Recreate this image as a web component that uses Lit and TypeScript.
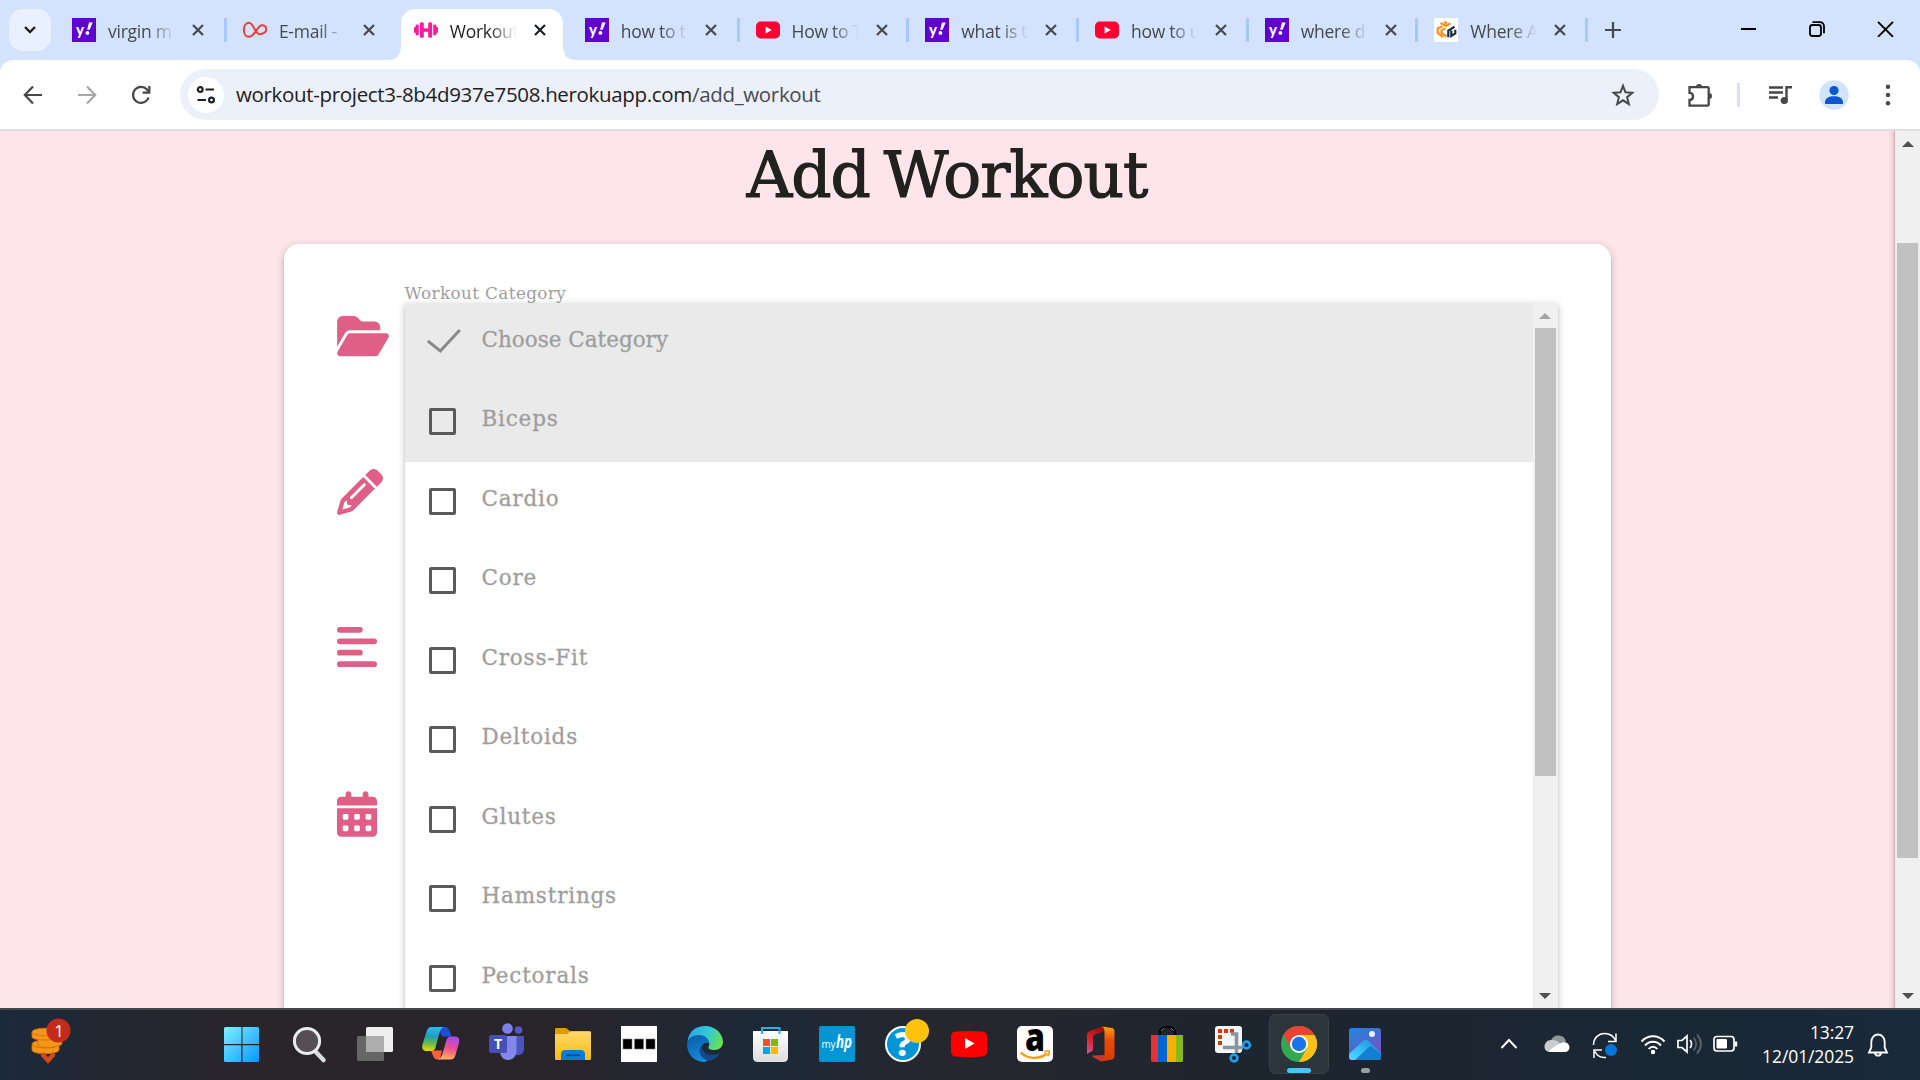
import { LitElement, html, css, TemplateResult } from "lit";
import { customElement } from "lit/decorators.js";
import { classMap } from "lit/directives/class-map.js";

const yahoo = html`<svg class="fav" viewBox="0 0 24 24"><rect width="24" height="24" fill="#5f01d1"/><text x="4" y="16.5" font-family="Lato, sans-serif" font-weight="900" font-size="15" fill="#fff">y</text><path d="M17 4.6h3.7l-3.1 7.2h-2.5z" fill="#fff"/><circle cx="15.4" cy="14.9" r="1.9" fill="#fff"/></svg>`;
const youtube = html`<svg class="fav" viewBox="0 0 24 24"><rect y="3.6" width="24" height="16.8" rx="4.5" fill="#ff0033"/><path d="M9.6 8.4v7.2l6.2-3.6z" fill="#fff"/></svg>`;
const virgin = html`<svg class="fav" viewBox="0 0 24 24"><path d="M6 4.8c4.800 0 6.500 13.500 12 11.200 3-.9 5.300-1.500 5.300-4.500S21 6.800 18.500 7.300C14.500 8 11.500 18.800 6 18.800 2.500 18.800.9 15.500.9 12S2.500 4.800 6 4.800z" fill="none" stroke="#ee3c35" stroke-width="1.9"/></svg>`;
const dumbbell = html`<svg class="fav" viewBox="0 0 24 24" fill="#fb1c9b"><rect x="0" y="9" width="2.200" height="6" rx="1"/><rect x="1.600" y="6.500" width="3.200" height="11" rx="1.4"/><rect x="5.800" y="4.300" width="4" height="15.400" rx="1.500"/><rect x="9" y="10.300" width="6" height="3.500"/><rect x="14.200" y="4.300" width="4" height="15.400" rx="1.500"/><rect x="19.200" y="6.500" width="3.200" height="11" rx="1.4"/><rect x="21.800" y="9" width="2.200" height="6" rx="1"/></svg>`;
const hexLogo = html`<svg class="fav" viewBox="0 0 24 24"><rect width="24" height="24" fill="#fff"/><g fill="none" stroke-width="2.200"><path d="M6.500 5l5.500 3 4.500-2.800M10 3.800l3.200 1.700" stroke="#f7931e"/><path d="M8.500 8.300 3.700 10.500v4.500l5.300 4M11.500 10.200 7.500 12.300v2.500l5 3.700" stroke="#f7931e"/><path d="M20.500 8.800 14.300 12.500v6.700M17.300 12.500v5.500l4-2.700v-3.600" stroke="#1c2a44"/></g></svg>`;

interface Tab { icon: TemplateResult; title: string; active?: boolean }
const tabs: Tab[] = [
  { icon: yahoo, title: "virgin m" },
  { icon: virgin, title: "E-mail -" },
  { icon: dumbbell, title: "Workout", active: true },
  { icon: yahoo, title: "how to t" },
  { icon: youtube, title: "How to T" },
  { icon: yahoo, title: "what is t" },
  { icon: youtube, title: "how to u" },
  { icon: yahoo, title: "where d" },
  { icon: hexLogo, title: "Where A" },
];

const options = ["Choose Category", "Biceps", "Cardio", "Core", "Cross-Fit", "Deltoids", "Glutes", "Hamstrings", "Pectorals"];

const taskIcons: TemplateResult[] = [
  html`<svg class="task" viewBox="0 0 66 72"><defs><linearGradient id="w" x1="0" y1="0" x2="1" y2="1"><stop offset="0" stop-color="#7ff0ff"/><stop offset="1" stop-color="#0a96ff"/></linearGradient></defs><path d="M15.500 19h15.700a1 1 0 0 1 .3.500V36H14V20.500A1.500 1.500 0 0 1 15.500 19zM32.500 19h15a1.500 1.500 0 0 1 1.500 1.500V36H32.500zM14 37.300h17.300V54H15.500a1.500 1.500 0 0 1-1.500-1.500zM32.500 37.300H49v15.200a1.500 1.500 0 0 1-1.500 1.500h-15z" fill="url(#w)"/></svg>`,
  html`<svg class="task" viewBox="0 0 66 72"><path d="M39 43l8.500 9" stroke="#d7dbde" stroke-width="4.500" stroke-linecap="round"/><circle cx="31" cy="33" r="12.600" fill="#554e55" stroke="#e9edef" stroke-width="3"/></svg>`,
  html`<svg class="task" viewBox="0 0 66 72"><rect x="15" y="28" width="27" height="25" rx="1.500" fill="#666"/><rect x="24" y="19" width="27" height="25" rx="1.500" fill="#eee"/><path d="M24 28h18v16H25.500a1.500 1.500 0 0 1-1.500-1.500z" fill="#adadad"/></svg>`,
  html`<svg class="task" viewBox="0 0 66 72"><defs><linearGradient id="c1" x1="0.400" y1="0" x2="0.300" y2="1"><stop offset="0" stop-color="#2cb8f5"/><stop offset=".4" stop-color="#239fb5"/><stop offset=".7" stop-color="#6dbb47"/><stop offset="1" stop-color="#f5d20c"/></linearGradient><linearGradient id="c2" x1="0.600" y1="0" x2="0.400" y2="1"><stop offset="0" stop-color="#a44bea"/><stop offset=".5" stop-color="#ee4f95"/><stop offset="1" stop-color="#fdb25c"/></linearGradient></defs><path d="M30 19h7c3 0 4 2 5 5l1.500 4.500H34z" fill="#1a4fd8"/><path d="M23 42.500h11L32 51.500h-3c-3 0-4-4-6-9z" fill="#f8603c"/><path d="M23 19h13c-3 1-4 4-5 7.500l-3.500 13c-.7 2.300-2 3.500-4 3.500H18.500c-3.500 0-5-2.500-4-6.500l4-13C19.500 20.500 21 19 23 19z" fill="url(#c1)"/><path d="M43 51.500H30c3-1 4-4 5-7.500l3.500-12c.7-2.300 2-3.500 4-3.500H47c3.500 0 5 2.500 4 6.500l-3.500 12c-.8 3-2.300 4.500-4.500 4.500z" fill="url(#c2)"/></svg>`,
  html`<svg class="task" viewBox="0 0 66 72"><circle cx="44.500" cy="22" r="3.800" fill="#5059c9"/><path d="M38 28h12v12.500c0 4-2 6-5 6.500h-7z" fill="#4b53bc"/><circle cx="33.500" cy="20.500" r="5.300" fill="#7b83eb"/><path d="M26 28h16.500v14.500C42.500 48 39 52 34 52c-5 0-8-4-8-9z" fill="#8288ea"/><rect x="15" y="27" width="18" height="18" rx="2" fill="#464eb8"/><text x="24" y="41" text-anchor="middle" font-family="Open Sans, sans-serif" font-weight="700" font-size="14" fill="#fff">T</text></svg>`,
  html`<svg class="task" viewBox="0 0 66 72"><defs><linearGradient id="f" x1="0" y1="0" x2="0" y2="1"><stop offset="0" stop-color="#ffd96a"/><stop offset="1" stop-color="#fbba10"/></linearGradient></defs><path d="M15 21.500c0-1 .7-1.500 1.500-1.500h9.500l4 3h19c1 0 2 .8 2 2v6H15z" fill="#e19b04"/><path d="M15 26h12l3.500-2.500H50c.7 0 1 .5 1 1V50.500c0 1-.8 1.500-1.500 1.500h-33c-.8 0-1.500-.5-1.500-1.500z" fill="url(#f)"/><path d="M21 52v-6c0-2 1.500-4 4-4h16c2.500 0 4 2 4 4v6z" fill="#0f7cd2"/><path d="M26 47.300h14" stroke="#0a4a8c" stroke-width="1.700"/></svg>`,
  html`<svg class="task" viewBox="0 0 66 72"><rect x="15" y="18" width="36" height="36" fill="#fff"/><path d="M17 31h9v10h-9zM28.500 31h9v10h-9zM40 31h9v10h-9z" fill="#000" stroke="#777" stroke-width=".6"/></svg>`,
  html`<svg class="task" viewBox="0 0 66 72"><defs><linearGradient id="e1" x1="0" y1="0.300" x2="1" y2="0.600"><stop offset="0" stop-color="#2aa8e8"/><stop offset=".5" stop-color="#2fc8d8"/><stop offset="1" stop-color="#6be34d"/></linearGradient><linearGradient id="e2" x1="0" y1="0" x2="0.300" y2="1"><stop offset="0" stop-color="#0c59a4"/><stop offset="1" stop-color="#1489d8"/></linearGradient></defs><path d="M15.500 33C17 23 24 18 33 18c11 0 18 8 18 16 0 5-4 8-8.500 8-4 0-7-1-6-3 1.500-2.500 1-7-4-9-6-2.500-13-1-17 3z" fill="url(#e1)"/><path d="M15 36c.5-6 6-9 12-9 6 0 10.500 4 10.500 9-2-2-5-1.500-7 1-3 4-1 11 5 14.500-.5 1.500-1.500 2.500-2.500 2.500C23 54 15 47 15 36z" fill="url(#e2)"/><path d="M29.500 37.500c-5 6 0 14.500 8.500 15.200 4-1 8-4 10.300-8-7 4-15 2-17.300-3-.7-1.700-1-3-1.500-4.200z" fill="#114a8b"/></svg>`,
  html`<svg class="task" viewBox="0 0 66 72"><defs><linearGradient id="s" x1="0" y1="0" x2="0" y2="1"><stop offset="0" stop-color="#fff"/><stop offset="1" stop-color="#dcdcdc"/></linearGradient></defs><path d="M15 23h35v26.500c0 3-2 4.500-4.500 4.500h-26c-2.500 0-4.500-1.500-4.500-4.500z" fill="url(#s)"/><path d="M24 26v-6h17.500v6" fill="none" stroke="#27b2e5" stroke-width="2"/><path d="M25 31h7v7h-7z" fill="#f25022"/><path d="M33 31h7v7h-7z" fill="#7fba00"/><path d="M25 39h7v7h-7z" fill="#00a4ef"/><path d="M33 39h7v7h-7z" fill="#ffb900"/></svg>`,
  html`<svg class="task" viewBox="0 0 66 72"><rect x="15" y="18" width="36" height="36" rx="2" fill="#0096d6"/><text x="17.500" y="40" font-family="Open Sans, sans-serif" font-size="11" textLength="14" lengthAdjust="spacingAndGlyphs" fill="#fff">my</text><text x="32" y="40" font-family="Open Sans, sans-serif" font-weight="700" font-style="italic" font-size="17" textLength="16" lengthAdjust="spacingAndGlyphs" fill="#fff">hp</text></svg>`,
  html`<svg class="task" viewBox="0 0 66 72"><circle cx="33" cy="36" r="17" fill="#0096d6" stroke="#fff" stroke-width="2"/><text x="33" y="48" text-anchor="middle" font-family="Open Sans, sans-serif" font-weight="800" font-size="33" fill="#fff">?</text><circle cx="47" cy="23" r="12" fill="#ffc20e"/></svg>`,
  html`<svg class="task" viewBox="0 0 66 72"><path d="M20 23.500q13-1.200 26 0c3.500.4 5 2 5 5.500v14c0 3.500-1.500 5.200-5 5.600q-13 1.200-26 0c-3.500-.4-5-2.100-5-5.600V29c0-3.500 1.500-5.100 5-5.500z" fill="#f00"/><path d="M29 30v11l9.500-5.500z" fill="#fff"/></svg>`,
  html`<svg class="task" viewBox="0 0 66 72"><rect x="15" y="18" width="36" height="36" rx="5" fill="#fff"/><text x="33" y="43" text-anchor="middle" font-family="Open Sans, sans-serif" font-weight="800" font-size="39" textLength="20" lengthAdjust="spacingAndGlyphs" fill="#000">a</text><path d="M18.500 44.500c8 7 19 7 26.500 1" fill="none" stroke="#f90" stroke-width="2.300"/><path d="M42 44c3-1.500 5-1.300 5.300-.8.300.8-.3 3-1.800 5" fill="none" stroke="#f90" stroke-width="1.500"/></svg>`,
  html`<svg class="task" viewBox="0 0 66 72"><defs><linearGradient id="o1" x1="0.500" y1="0" x2="0" y2="1"><stop offset="0" stop-color="#a90d10"/><stop offset=".5" stop-color="#d5242c"/><stop offset="1" stop-color="#c8599f"/></linearGradient><linearGradient id="o2" x1="0" y1="0" x2="0" y2="1"><stop offset="0" stop-color="#ffa014"/><stop offset=".4" stop-color="#e84a0a"/><stop offset="1" stop-color="#d83b01"/></linearGradient></defs><path d="M34 18.500 22 23c-2 .8-3 2-3 4v19l6-3.500V29c0-1 .5-2 1.500-2.300L37 23z" fill="url(#o1)"/><path d="M24 47.500l13-.5v5l-3.500 1.500-7-3.500c-2-1-2.500-2-2.500-2.500z" fill="#c9352c"/><path d="M34 18.500l10 1.500c1.800.5 2.500 1.500 2.500 3.500V48c0 2-.8 3-2.500 3.500L33.500 53.500c2-1 3-2.500 3-5V24c0-3-1-4.500-2.500-5.500z" fill="url(#o2)"/></svg>`,
  html`<svg class="task" viewBox="0 0 66 72"><path d="M26 28v-3c0-4 3-6 7.500-6s7.500 2 7.500 6v3" fill="none" stroke="#050505" stroke-width="2.600"/><path d="M27 23l3-3M37 20l3 3" stroke="#777" stroke-width="1"/><path d="M17 27h7v27h-5.500c-1 0-1.500-.8-1.500-1.500z" fill="#e53238"/><path d="M24 27h9v27h-9z" fill="#0064d2"/><path d="M33 27h9v27h-9z" fill="#f5af02"/><path d="M42 27h7v25.500c0 .7-.5 1.500-1.500 1.500H42z" fill="#86b817"/></svg>`,
  html`<svg class="task" viewBox="0 0 66 72"><rect x="15" y="18" width="27" height="27" rx="3" fill="#f3f6f9"/><path d="M20 37V23h14" fill="none" stroke="#d83b01" stroke-width="4" stroke-dasharray="4 2"/><path d="M36.500 45V26H31M23 39.500h20" fill="none" stroke="#8d959c" stroke-width="3.600"/><circle cx="46.500" cy="37" r="3.400" fill="none" stroke="#1ba1ee" stroke-width="2.600"/><circle cx="34" cy="50" r="3.400" fill="none" stroke="#1ba1ee" stroke-width="2.600"/></svg>`,
  html`<svg class="task" viewBox="0 0 66 72"><rect x="3.500" y="6.500" width="59" height="59" rx="6" fill="#2d353c" stroke="#394148"/><circle cx="33" cy="36" r="18" fill="#34a853"/><path d="M17.400 27A18 18 0 0 1 48.600 27H33l-7.800 13.500z" fill="#ea4335"/><path d="M48.600 27A18 18 0 0 1 33 54l7.800-13.500L33 27z" fill="#fbc116"/><circle cx="33" cy="36" r="9" fill="#fff"/><circle cx="33" cy="36" r="7.200" fill="#1a73e8"/><rect x="21" y="60" width="24" height="5" rx="2.500" fill="#4cc2ff"/></svg>`,
  html`<svg class="task" viewBox="0 0 66 72"><defs><linearGradient id="p" x1="0" y1="0" x2="0.600" y2="1"><stop offset="0" stop-color="#1a8ade"/><stop offset="1" stop-color="#7a4fc0"/></linearGradient><linearGradient id="q" x1="0" y1="1" x2="1" y2="0"><stop offset="0" stop-color="#4fdcff"/><stop offset="1" stop-color="#168ee0"/></linearGradient></defs><rect x="17" y="20" width="32" height="32" rx="3" fill="url(#p)"/><path d="M17 46l14.500-13.500c1.500-1.300 3-1.300 4.500 0L49 45v4c0 2-1 3-3 3H20c-2 0-3-1-3-3z" fill="url(#q)"/><path d="M23 52l14-13c1.200-1 2.300-1 3.500 0L49 46v3c0 2-1 3-3 3z" fill="#147fd0"/><circle cx="40" cy="26" r="3" fill="#e7f1fb"/><rect x="29" y="60" width="9" height="5" rx="2.500" fill="#9a9fa4"/></svg>`,
];

@customElement("app-root")
export class AppRoot extends LitElement {
  static styles = css`
    :host { display: block; width: 1920px; height: 1080px; overflow: hidden; font-family: "Open Sans", "Noto Sans", sans-serif; }
    * { box-sizing: border-box; }
    svg { display: block; flex: none; }
    .screen { width: 1920px; height: 1080px; display: flex; flex-direction: column; background: #fee5ec; }
    .tabbar { height: 60px; flex: none; display: flex; background: #d3e2fd; padding-left: 9px; }
    .search { width: 42px; height: 42px; margin-top: 9px; margin-right: 5px; border-radius: 14px; background: #eaf1fe; display: flex; align-items: center; justify-content: center; flex: none; }
    .tab { width: 169.7px; flex: none; height: 60px; display: flex; align-items: center; padding-left: 16px; position: relative; color: #45494f; }
    .tab:nth-child(-n + 5) { width: 170.9px; }
    .tab.active { color: #1f2023; }
    .shape { position: absolute; left: -9px; top: 9px; }
    .fav { width: 24px; height: 24px; position: relative; }
    .title { width: 71px; margin-left: 12px; font-size: 17.5px; letter-spacing: -0.25px; line-height: 30px; white-space: nowrap; position: relative; top: 1px; -webkit-mask-image: linear-gradient(90deg, #000 56%, transparent 94%); mask-image: linear-gradient(90deg, #000 56%, transparent 94%); }
    .close { margin-left: 13px; position: relative; }
    .sep { width: 3px; height: 24px; border-radius: 1px; background: #a8c7fa; margin-left: auto; }
    .plus { margin-top: 22px; margin-left: 17px; }
    .win { display: flex; align-items: center; margin-left: auto; height: 58px; gap: 51px; padding-right: 26px; }
    .under { background: #d3e2fd; flex: none; }
    .toolbar { height: 71px; background: #fff; border-radius: 13px 13px 0 0; border-bottom: 2px solid #dfe1e1; display: flex; align-items: center; padding-left: 21px; }
    .nav { display: flex; gap: 30px; margin-right: 27px; }
    .url { width: 1479px; height: 51px; border-radius: 26px; background: #ebf0fa; display: flex; align-items: center; padding: 0 24px 0 8px; }
    .site { width: 36px; height: 36px; border-radius: 50%; background: #fff; display: flex; align-items: center; justify-content: center; }
    .addr { margin-left: 12px; margin-top: -2px; flex: 1; font-size: 20.5px; letter-spacing: -0.33px; color: #1f2023; white-space: nowrap; }
    .addr span { color: #474a50; }
    .tools { flex: 1; display: flex; align-items: center; padding-left: 27px; }
    .tsep { width: 3px; height: 24px; background: #d3e2fd; margin-left: 23px; }
    .t1 { margin-left: 27.5px; } .t2 { margin-left: 25px; } .t3 { margin-left: 35px; }
    .page { flex: 1; min-height: 0; display: flex; overflow: hidden; }
    .body { width: 1895px; display: flex; flex-direction: column; align-items: center; border-right: 1px solid #e0a8bb; box-shadow: inset -5px 0 5px -3px rgba(0,0,0,.13); font-family: "DejaVu Serif", "Liberation Serif", serif; }
    h1 { margin: 0; height: 113px; flex: none; padding-top: 7px; font-size: 63px; line-height: 76px; font-weight: 400; letter-spacing: -1px; word-spacing: -5px; color: #212121; -webkit-text-stroke: 1.2px #212121; }
    .card { width: 1327px; height: 900px; flex: none; background: #fff; border-radius: 15px; display: flex; padding: 0 53px; box-shadow: 0 3px 3px 0 rgba(0,0,0,.14), 0 4px 2px -3px rgba(0,0,0,.12), 0 2px 8px 0 rgba(0,0,0,.2); }
    .icons { width: 68px; display: flex; flex-direction: column; color: #e05f87; }
    .i1 { margin-top: 69px; } .i2 { margin-top: 110px; } .i3 { margin-top: 109px; } .i4 { margin-top: 121px; }
    .field { width: 1153px; display: flex; flex-direction: column; }
    .label { height: 59px; padding-top: 37px; font-size: 16.8px; line-height: 24px; letter-spacing: 0.4px; color: #9e9e9e; }
    .drop { flex: 1; display: flex; background: #fff; box-shadow: 0 3px 3px 0 rgba(0,0,0,.14), 0 4px 2px -3px rgba(0,0,0,.12), 0 2px 8px 0 rgba(0,0,0,.2); }
    .list { flex: 1; }
    .row { height: 79.5px; display: flex; padding-left: 24px; font-size: 21.5px; letter-spacing: 0.8px; line-height: 30px; color: #9e9e9e; -webkit-text-stroke: 0.3px #9e9e9e; }
    .row:first-child { letter-spacing: 0; }
    .row.on { background: #eaeaea; }
    .row span { margin-top: 21.5px; margin-left: 26px; }
    .box { width: 27px; height: 27px; margin-top: 25.5px; border: 3px solid #5a5a5a; border-radius: 2px; }
    .check { margin: 25px -5px 0 -2px; }
    .bar { width: 25px; height: 705px; background: #f0f0f0; display: flex; flex-direction: column; align-items: center; padding: 10px 0 9px; }
    .bar.main { height: 877px; }
    .thumb { width: 21px; height: 448px; margin-top: 9px; background: #c1c1c1; }
    .main .thumb { height: 615px; margin-top: 96px; }
    .down { margin-top: auto; }
    .taskbar { height: 72px; flex: none; border-top: 2px solid #43484e; display: flex; background: linear-gradient(90deg, #1b2a3b 0, #222731 110px, #29252b 240px, #29242a 560px, #1d2937 760px, #27262e 960px, #1d252e 1250px, #1b2733 1560px, #182939 1920px); }
    .coins, .task { margin-top: -2px; }
    .coins { width: 210px; height: 72px; }
    .task { width: 66px; height: 72px; }
    .tray { margin-left: auto; width: 422px; display: flex; margin-top: -2px; }
    .clock { width: 110px; text-align: right; color: #fff; font-size: 17.5px; line-height: 24px; letter-spacing: -0.1px; padding-top: 12px; }
  `;

  private tab(t: Tab, i: number) {
    return html`<div class=${classMap({ tab: true, active: !!t.active })}>
      ${t.active ? html`<svg class="shape" width="186" height="51" viewBox="0 0 186 51"><path d="M0 51c8 0 12-6 12-14V15C12 6 18 0 27 0h132c9 0 15 6 15 15v22c0 8 4 14 12 14z" fill="#fff"/></svg>` : ""}
      ${t.icon}
      <div class="title">${t.title}</div>
      <svg class="close" width="12" height="12" viewBox="0 0 12 12"><path d="M1 1l10 10M11 1L1 11" stroke="currentColor" stroke-width="2.200"/></svg>
      ${t.active || tabs[i + 1]?.active ? "" : html`<div class="sep"></div>`}
    </div>`;
  }

  private arrow(up: boolean, color: string) {
    return html`<svg class=${up ? "up" : "down"} width="12" height="6" viewBox="0 0 12 6"><path d=${up ? "M0 6h12L6 0z" : "M0 0h12L6 6z"} fill=${color}/></svg>`;
  }

  render() {
    return html`<div class="screen">
      <div class="tabbar">
        <div class="search"><svg width="12" height="8" viewBox="0 0 12 8"><path d="M1 1l5 5 5-5" fill="none" stroke="#1f2023" stroke-width="2.400"/></svg></div>
        ${tabs.map((t, i) => this.tab(t, i))}
        <svg class="plus" width="16" height="16" viewBox="0 0 16 16"><path d="M8 0v16M0 8h16" stroke="#45494f" stroke-width="2.200"/></svg>
        <div class="win">
          <svg width="16" height="16" viewBox="0 0 16 16"><path d="M0 8h15" stroke="#000" stroke-width="2"/></svg>
          <svg width="18" height="16" viewBox="0 0 18 16"><rect x="2" y="4" width="11" height="11" rx="2.500" fill="none" stroke="#000" stroke-width="1.800"/><path d="M4.500 1.200H12a4 4 0 0 1 4 4v7" fill="none" stroke="#000" stroke-width="1.800"/></svg>
          <svg width="17" height="16" viewBox="0 0 17 16"><path d="M1 .8l15 15M16 .8l-15 15" stroke="#000" stroke-width="1.900"/></svg>
        </div>
      </div>
      <div class="under"><div class="toolbar">
        <div class="nav">
          <svg width="24" height="24" viewBox="0 0 24 24"><path d="M21 12H4M12 3.500L3.800 12l8.200 8.500" fill="none" stroke="#474747" stroke-width="2.200"/></svg>
          <svg width="24" height="24" viewBox="0 0 24 24"><path d="M3 12h17M12 3.500l8.200 8.500-8.200 8.500" fill="none" stroke="#a8a8a8" stroke-width="2.200"/></svg>
          <svg width="24" height="24" viewBox="0 0 24 24"><path d="M19.600 14.500A8 8 0 1 1 18 6.500l1.800 2" fill="none" stroke="#474747" stroke-width="2.200"/><path d="M20.300 3v6.700h-6.700" fill="none" stroke="#474747" stroke-width="2.200"/></svg>
        </div>
        <div class="url">
          <div class="site"><svg width="20" height="20" viewBox="0 0 20 20" fill="none" stroke="#1f2023" stroke-width="2.200"><circle cx="4.200" cy="4.500" r="2.400"/><path d="M9.500 4.500H18M1.500 15H10"/><circle cx="15.500" cy="15" r="2.400"/></svg></div>
          <div class="addr">workout-project3-8b4d937e7508.herokuapp.com<span>/add_workout</span></div>
          <svg width="24" height="24" viewBox="0 0 24 24"><path d="M12 2.800l2.500 6.500 6.800.5-5.200 4.400 1.700 6.800L12 17.300 6.200 21l1.700-6.800-5.200-4.400 6.800-.5z" fill="none" stroke="#474747" stroke-width="2"/></svg>
        </div>
        <div class="tools">
          <svg width="28" height="28" viewBox="0 0 28 28"><path d="M3.500 6.200h18a1.200 1.200 0 0 1 1.200 1.200v16a1.200 1.200 0 0 1-1.200 1.200h-18v-5.600c2 0 3.500-1.500 3.500-3.600s-1.500-3.600-3.500-3.600z" fill="none" stroke="#474747" stroke-width="2.300"/><path d="M10 6a3 3 0 0 1 6 0zM23 12a3 3 0 0 1 0 6z" fill="#474747"/></svg>
          <div class="tsep"></div>
          <svg class="t1" width="26" height="24" viewBox="0 0 26 24"><path d="M1 4.500h14M1 9.500h14M1 14.500h9" stroke="#474747" stroke-width="2.400"/><path d="M18.500 18V4.200H24" fill="none" stroke="#474747" stroke-width="2.400"/><circle cx="16.300" cy="17.500" r="3.600" fill="#474747"/></svg>
          <svg class="t2" width="30" height="30" viewBox="0 0 30 30"><circle cx="15" cy="15" r="14.800" fill="#d3e2fd"/><circle cx="15" cy="10.500" r="4.600" fill="#0b57d0"/><path d="M6 24v-1.500c0-4.500 4-6.300 9-6.300s9 1.800 9 6.300V24z" fill="#0b57d0"/></svg>
          <svg class="t3" width="8" height="24" viewBox="0 0 8 24" fill="#474747"><circle cx="4" cy="3.700" r="2.200"/><circle cx="4" cy="12" r="2.200"/><circle cx="4" cy="20.300" r="2.200"/></svg>
        </div>
      </div></div>
      <div class="page">
        <div class="body">
          <h1>Add Workout</h1>
          <div class="card">
            <div class="icons">
              <svg class="i1" width="52" height="46" viewBox="0 0 576 512" fill="currentColor"><path d="M88.7 223.8L0 375.8V96C0 60.7 28.7 32 64 32H181.5c17 0 33.3 6.7 45.3 18.7l26.5 26.5c12 12 28.3 18.7 45.3 18.7H416c35.3 0 64 28.7 64 64v32H144c-22.800 0-43.800 12.100-55.300 31.800zm27.600 16.100C122.100 230 132.600 224 144 224H544c11.500 0 22 6.100 27.700 16.100s5.700 22.200-.1 32.100l-112 192C453.900 474 443.400 480 432 480H32c-11.500 0-22-6.100-27.700-16.100s-5.700-22.200 .1-32.100l112-192z"/></svg>
              <svg class="i2" width="46" height="46" viewBox="0 0 512 512" fill="currentColor"><path d="M410.300 231l11.300-11.300-33.900-33.900-62.100-62.100L291.700 89.800l-11.300 11.300-22.600 22.600L58.600 322.900c-10.400 10.400-18 23.300-22.200 37.400L1 480.700c-2.500 8.400-.2 17.500 6.100 23.700s15.300 8.500 23.700 6.100l120.300-35.400c14.100-4.200 27-11.800 37.400-22.200L387.700 253.700 410.300 231zM160 399.400l-9.100 22.700c-4 3.100-8.500 5.400-13.300 6.900L59.400 452l23-78.100c1.400-4.900 3.800-9.400 6.900-13.300l22.700-9.100v32c0 8.800 7.200 16 16 16h32zM362.700 18.700L348.300 33.200 325.700 55.800 314.300 67.100l33.900 33.900 62.100 62.100 33.900 33.900 11.300-11.300 22.600-22.600 14.500-14.500c25-25 25-65.500 0-90.500L453.300 18.700c-25-25-65.500-25-90.500 0zm-47.400 168l-144 144c-6.200 6.200-16.400 6.200-22.600 0s-6.200-16.400 0-22.600l144-144c6.200-6.200 16.400-6.200 22.600 0s6.200 16.400 0 22.600z"/></svg>
              <svg class="i3" width="40" height="46" viewBox="0 0 448 512" fill="currentColor"><rect y="32" width="288" height="64" rx="32"/><rect y="160" width="448" height="64" rx="32"/><rect y="288" width="288" height="64" rx="32"/><rect y="416" width="448" height="64" rx="32"/></svg>
              <svg class="i4" width="40" height="46" viewBox="0 0 448 512" fill="currentColor"><path fill-rule="evenodd" d="M128 0c17.700 0 32 14.300 32 32v32h128V32c0-17.700 14.300-32 32-32s32 14.300 32 32v32h48c26.500 0 48 21.500 48 48v48H0v-48c0-26.500 21.500-48 48-48h48V32c0-17.700 14.300-32 32-32zM0 192h448v272c0 26.500-21.500 48-48 48H48c-26.500 0-48-21.500-48-48zM80 256q-16 0-16 16v32q0 16 16 16h32q16 0 16-16v-32q0-16-16-16zM208 256q-16 0-16 16v32q0 16 16 16h32q16 0 16-16v-32q0-16-16-16zM336 256q-16 0-16 16v32q0 16 16 16h32q16 0 16-16v-32q0-16-16-16zM80 384q-16 0-16 16v32q0 16 16 16h32q16 0 16-16v-32q0-16-16-16zM208 384q-16 0-16 16v32q0 16 16 16h32q16 0 16-16v-32q0-16-16-16zM336 384q-16 0-16 16v32q0 16 16 16h32q16 0 16-16v-32q0-16-16-16z"/></svg>
            </div>
            <div class="field">
              <div class="label">Workout Category</div>
              <div class="drop">
                <div class="list">
                  ${options.map((o, i) => html`<div class=${classMap({ row: true, on: i < 2 })}>
                    ${i === 0 ? html`<svg class="check" width="34" height="30" viewBox="0 0 34 30"><path d="M.8 13l12.500 10L32.800 2" fill="none" stroke="#8a8a8a" stroke-width="3"/></svg>` : html`<div class="box"></div>`}
                    <span>${o}</span></div>`)}
                </div>
                <div class="bar">${this.arrow(true, "#a3a3a3")}<div class="thumb"></div>${this.arrow(false, "#505050")}</div>
              </div>
            </div>
          </div>
        </div>
        <div class="bar main">${this.arrow(true, "#505050")}<div class="thumb"></div>${this.arrow(false, "#505050")}</div>
      </div>
      <div class="taskbar">
        <svg class="coins" viewBox="0 0 210 72"><g fill="#f39619" stroke="#cf6f06" stroke-width=".8"><path d="M32 36v6c0 5 26 5 27 0v-6z"/><ellipse cx="45.500" cy="36" rx="13.500" ry="4"/><path d="M38 30v6c0 5 20 4 24 0v-6z"/><path d="M32 24v5c0 4 24 4 26 0v-5z"/><ellipse cx="45" cy="24" rx="13" ry="3.800"/></g><path d="M43 47l5 5.500 5-5.500" fill="none" stroke="#d24a1c" stroke-width="4.500" stroke-linecap="round"/><circle cx="58.500" cy="22.500" r="12" fill="#c42b1c"/><text x="59" y="29" text-anchor="middle" font-family="Open Sans, sans-serif" font-size="17" fill="#fff">1</text></svg>
        ${taskIcons}
        <div class="tray">
          <svg width="246" height="72" viewBox="1498 1008 246 72" fill="none" stroke="#fff" stroke-width="1.700">
            <path d="M1501.500 1048l7.500-8 7.500 8" stroke-width="2"/>
            <path d="M1551 1041c1-4 4-5.500 7-5.500 4 0 7 2 8 6l-7 5z" fill="#8f969c" stroke="none"/><path d="M1550 1052c-4 0-5.500-3-5.500-5.500 0-3 2.500-6.500 6.500-6.500 4-.5 7 1 9 3.500l-8 8z" fill="#c9cdd0" stroke="none"/><path d="M1549 1052c0-2 5-6 12-9 4-2 8 0 8.500 4 0 3-2 5-5 5z" fill="#fff" stroke="none"/>
            <path d="M1593.500 1045c0-7 5-11.500 11-11.500 5 0 9 2.500 11 7M1616 1033.500v8h-8M1594 1058v-8h8M1595 1051.500c2 4 6 6.500 11 6" stroke-width="1.500"/><circle cx="1611" cy="1050" r="6" fill="#0078d9" stroke="none"/>
            <path d="M1641.500 1041.500c6.500-7 16.500-7 23 0M1645 1045.500c4.500-5 11.500-5 16 0M1648.600 1049c2.600-3 6.200-3 8.800 0" stroke-width="1.900"/><circle cx="1653" cy="1052" r="2.200" fill="#fff" stroke="none"/>
            <path d="M1678 1040.500h4l5-4.500v16l-5-4.500h-4z"/><path d="M1690 1040c2 2 2 6 0 8"/><path d="M1693.500 1037.500c3.500 4 3.500 9 0 13M1697 1034.500c5 6 5 13 0 19" stroke="#5d666f"/>
            <rect x="1714" y="1036.500" width="20" height="14.500" rx="3"/><rect x="1716.500" y="1039" width="10.500" height="9.500" rx="1" fill="#fff" stroke="none"/><path d="M1736 1041.500v5" stroke-width="2.400"/>
          </svg>
          <div class="clock">13:27<br>12/01/2025</div>
          <svg width="48" height="72" viewBox="0 0 48 72" fill="none" stroke="#fff" stroke-width="1.800"><path d="M15 44.500l2.300-5V34c0-4.200 3-7.500 6.700-7.500s6.700 3.300 6.700 7.500v5.500l2.300 5zM21 45c.5 3.500 5.500 3.500 6 0"/></svg>
        </div>
      </div>
    </div>`;
  }
}
